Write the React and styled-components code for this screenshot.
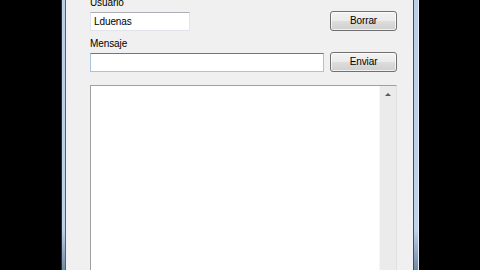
import React from 'react'
import styled, { createGlobalStyle } from 'styled-components'

const Global = createGlobalStyle`
  html, body {
    margin: 0;
    padding: 0;
    background: #000;
    height: 100%;
    overflow: hidden;
  }
  #root { height: 100%; }
`

const Screen = styled.div`
  width: 480px;
  height: 270px;
  display: flex;
  background: #000;
`

const Frame = styled.div`
  margin-left: 61px;
  width: 358px;
  height: 100%;
  box-sizing: border-box;
  display: flex;
  background: linear-gradient(#b7cfe9, #bcd3ec 85%, #6f8aa6);
  border-left: 1px solid #1f2c38;
  border-right: 1px solid #e8eef5;
  padding: 0 4px 0 3px;
`

const Client = styled.div`
  flex: 1;
  background: #f0f0f0;
  border-left: 1px solid #4f6273;
  border-right: 1px solid #3b4c5c;
  padding: 0 16px 0 24px;
  overflow: hidden;
  font-family: "Liberation Sans", Arial, sans-serif;
  font-size: 10px;
  color: #000;
`

const Form = styled.div`
  margin-top: -4px;
  display: grid;
  grid-template-columns: 1fr 67px;
  column-gap: 6px;
`

const Label = styled.div`
  grid-column: 1 / 3;
  height: 15px;
  line-height: 14px;
  letter-spacing: -0.1px;
  margin-top: ${p => p.$top || 0}px;
`

const TextBox = styled.div`
  box-sizing: border-box;
  height: 19px;
  width: ${p => p.$width || 'auto'};
  background: #fff;
  border: 1px solid ${p => (p.$focus ? '#a7c3dd' : '#e2e3ea')};
  border-top-color: ${p => (p.$focus ? '#5b7d99' : '#abadb3')};
  padding: 0 3px;
  line-height: 17px;
  letter-spacing: -0.1px;
  margin-top: 1px;
`

const Button = styled.div`
  box-sizing: border-box;
  height: 20px;
  border: 1px solid #707070;
  border-radius: 3px;
  background: linear-gradient(#f3f3f3 0%, #ebebeb 48%, #dddddd 52%, #cfcfcf 100%);
  box-shadow: inset 0 0 0 1px rgba(255,255,255,0.7);
  text-align: center;
  line-height: 18px;
  letter-spacing: -0.1px;
`

const Log = styled.div`
  margin-top: 13px;
  height: 200px;
  box-sizing: border-box;
  border: 1px solid #a0a0a0;
  border-right-color: #e0e0e0;
  background: #fff;
  display: flex;
  justify-content: flex-end;
`

const ScrollBar = styled.div`
  width: 16px;
  background: #ebebeb;
  border-left: 1px solid #f7f7f7;
  display: flex;
  justify-content: center;
  padding-top: 7px;
`

const Arrow = styled.div`
  width: 0;
  height: 0;
  border-left: 3px solid transparent;
  border-right: 3px solid transparent;
  border-bottom: 3px solid #5a5a5a;
`

export default function App() {
  return (
    <Screen>
      <Global />
      <Frame>
        <Client>
          <Form>
            <Label>Usuario</Label>
            <TextBox $width="100px">Lduenas</TextBox>
            <Button>Borrar</Button>
            <Label $top={6}>Mensaje</Label>
            <TextBox $focus />
            <Button>Enviar</Button>
          </Form>
          <Log>
            <ScrollBar>
              <Arrow />
            </ScrollBar>
          </Log>
        </Client>
      </Frame>
    </Screen>
  )
}
